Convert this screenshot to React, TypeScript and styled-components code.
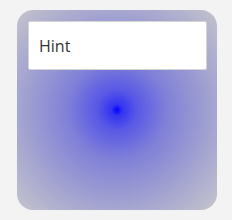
import styled, { createGlobalStyle } from "styled-components";

const GlobalStyle = createGlobalStyle`
  body {
    margin: 0;
    background: #f3f3f3;
    font-family: "Open Sans", "Noto Sans", sans-serif;
  }
`;

const Page = styled.div`
  padding: 10px 15px 10px 17px;
`;

const Card = styled.div`
  width: 200px;
  height: 200px;
  box-sizing: border-box;
  border-radius: 16px;
  padding: 11px 10px 0 11px;
  background: radial-gradient(
    circle farthest-corner at center,
    #0000ff 0%,
    #3434f2 4%,
    #5858e6 14%,
    #8080d8 35%,
    #a6a6d0 70%,
    #c4c4cc 100%
  );
`;

const HintInput = styled.input`
  display: block;
  width: 100%;
  height: 49px;
  box-sizing: border-box;
  border: 1px solid #d4d4d4;
  border-radius: 2px;
  background: #ffffff;
  padding: 0 10px;
  font: 400 16px "Open Sans", sans-serif;
  color: #333;
  outline: none;

  &::placeholder {
    color: #333;
  }
`;

export default function App() {
  return (
    <>
      <GlobalStyle />
      <Page>
        <Card>
          <HintInput placeholder="Hint" />
        </Card>
      </Page>
    </>
  );
}
